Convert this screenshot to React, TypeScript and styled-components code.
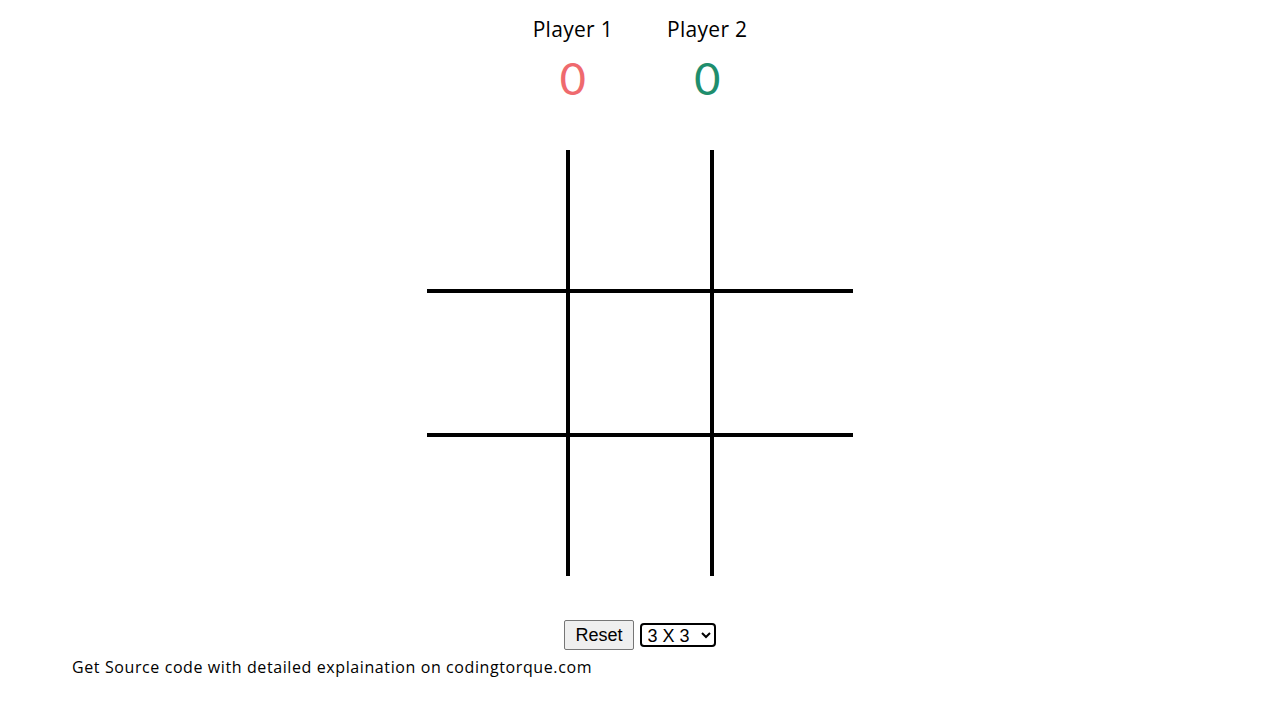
import React, {useState} from 'react';
import styled, {createGlobalStyle} from 'styled-components';

const GlobalStyle = createGlobalStyle`
    body {
        margin: 0;
        background: #fff;
        font-family: "Open Sans", "Liberation Sans", sans-serif;
    }
`;

const Page = styled.div`
    display: flex;
    flex-direction: column;
    align-items: center;
    padding-top: 14px;
`;

const Scoreboard = styled.div`
    display: flex;
    gap: 54px;
`;

const Player = styled.div`
    display: flex;
    flex-direction: column;
    align-items: center;
`;

const PlayerName = styled.div`
    font-family: "Comic Sans MS", "Open Sans", sans-serif;
    font-size: 21px;
    letter-spacing: 0.3px;
    line-height: 30px;
    color: #000;
`;

const Score = styled.div<{ $color: string }>`
    font-family: Lato, "Open Sans", sans-serif;
    font-size: 45px;
    line-height: 56px;
    margin-top: 6px;
    color: ${props => props.$color};
`;

const Board = styled.div`
    display: grid;
    grid-template-columns: 141px 144px 141px;
    grid-template-rows: 141px 144px 141px;
    margin-top: 44px;
`;

const Cell = styled.div<{ $row: number; $col: number }>`
    box-sizing: border-box;
    border-top: ${props => props.$row > 0 ? '2px solid #000' : 'none'};
    border-bottom: ${props => props.$row < 2 ? '2px solid #000' : 'none'};
    border-left: ${props => props.$col > 0 ? '2px solid #000' : 'none'};
    border-right: ${props => props.$col < 2 ? '2px solid #000' : 'none'};
    cursor: pointer;
`;

const Controls = styled.div`
    display: flex;
    align-items: center;
    gap: 6px;
    margin-top: 44px;
`;

const ResetButton = styled.button`
    font-family: Arial, "Liberation Sans", sans-serif;
    font-size: 18px;
    height: 30px;
    padding: 1px 10px;
    background: #efefef;
    border: 1px solid #767676;
    border-radius: 2px;
    color: #000;
`;

const SizeSelect = styled.select`
    font-family: Arial, "Liberation Sans", sans-serif;
    font-size: 18px;
    height: 24px;
    width: 76px;
    border: 2px solid #000;
    border-radius: 4px;
    background: #fff;
    color: #000;
    padding: 0 2px;
`;

const Footer = styled.div`
    align-self: flex-start;
    margin-left: 72px;
    margin-top: 5px;
    font-size: 16px;
    letter-spacing: 0.6px;
    line-height: 24px;
    color: #000;
`;

const App: React.FC = () => {
    const [size, setSize] = useState('3');
    const cells = Array.from({length: 9}, (_, i) => i);

    return (
        <>
            <GlobalStyle/>
            <Page>
                <Scoreboard>
                    <Player>
                        <PlayerName>Player 1</PlayerName>
                        <Score $color="#ef6a6e">0</Score>
                    </Player>
                    <Player>
                        <PlayerName>Player 2</PlayerName>
                        <Score $color="#1f8e6d">0</Score>
                    </Player>
                </Scoreboard>
                <Board>
                    {cells.map(i => (
                        <Cell key={i} $row={Math.floor(i / 3)} $col={i % 3}/>
                    ))}
                </Board>
                <Controls>
                    <ResetButton>Reset</ResetButton>
                    <SizeSelect value={size} onChange={e => setSize(e.target.value)}>
                        <option value="3">3 X 3</option>
                        <option value="4">4 X 4</option>
                        <option value="5">5 X 5</option>
                    </SizeSelect>
                </Controls>
                <Footer>Get Source code with detailed explaination on codingtorque.com</Footer>
            </Page>
        </>
    );
};

export default App;
